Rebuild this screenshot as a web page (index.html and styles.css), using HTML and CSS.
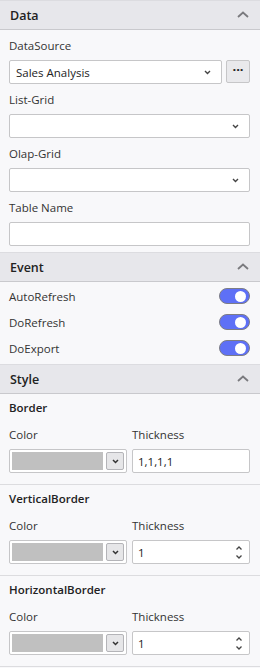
FILE: index.html
```html
<!DOCTYPE html>
<html lang="en">
<head>
  <meta charset="UTF-8" />
  <meta name="viewport" content="width=device-width, initial-scale=1.0"/>
  <title>Properties</title>
  <link rel="stylesheet" href="styles.css">
</head>
<body>
  <div class="panel">

    <!-- Data -->
    <div class="group">
      <div class="group-head">
        <span>Data</span>
        <svg class="caret" width="12" height="7" viewBox="0 0 12 7"><path d="M1 6 L6 1.5 L11 6" fill="none" stroke="#7a7a7e" stroke-width="1.8"/></svg>
      </div>
      <div class="group-body data-body">
        <div class="field">
          <label>DataSource</label>
          <div class="row">
            <div class="select">
              <span>Sales Analysis</span>
              <svg class="chev" width="7" height="5" viewBox="0 0 7 5"><path d="M1 1 L3.5 3.5 L6 1" fill="none" stroke="#444" stroke-width="1.4"/></svg>
            </div>
            <button class="more">&middot;&middot;&middot;</button>
          </div>
        </div>
        <div class="field">
          <label>List-Grid</label>
          <div class="select">
            <span></span>
            <svg class="chev" width="7" height="5" viewBox="0 0 7 5"><path d="M1 1 L3.5 3.5 L6 1" fill="none" stroke="#444" stroke-width="1.4"/></svg>
          </div>
        </div>
        <div class="field">
          <label>Olap-Grid</label>
          <div class="select">
            <span></span>
            <svg class="chev" width="7" height="5" viewBox="0 0 7 5"><path d="M1 1 L3.5 3.5 L6 1" fill="none" stroke="#444" stroke-width="1.4"/></svg>
          </div>
        </div>
        <div class="field">
          <label>Table Name</label>
          <div class="input"></div>
        </div>
      </div>
    </div>

    <!-- Event -->
    <div class="group">
      <div class="group-head">
        <span>Event</span>
        <svg class="caret" width="12" height="7" viewBox="0 0 12 7"><path d="M1 6 L6 1.5 L11 6" fill="none" stroke="#7a7a7e" stroke-width="1.8"/></svg>
      </div>
      <div class="group-body event-body">
        <div class="switch-row"><span>AutoRefresh</span><div class="switch on"></div></div>
        <div class="switch-row"><span>DoRefresh</span><div class="switch on"></div></div>
        <div class="switch-row"><span>DoExport</span><div class="switch on"></div></div>
      </div>
    </div>

    <!-- Style -->
    <div class="group">
      <div class="group-head">
        <span>Style</span>
        <svg class="caret" width="12" height="7" viewBox="0 0 12 7"><path d="M1 6 L6 1.5 L11 6" fill="none" stroke="#7a7a7e" stroke-width="1.8"/></svg>
      </div>
      <div class="group-body style-body">
        <div class="sub">
          <div class="sub-title">Border</div>
          <div class="cols">
            <div class="field">
              <label>Color</label>
              <div class="picker"><div class="swatch"></div><div class="pick-btn"><svg width="7" height="5" viewBox="0 0 7 5"><path d="M1 1 L3.5 3.5 L6 1" fill="none" stroke="#333" stroke-width="1.5"/></svg></div></div>
            </div>
            <div class="field">
              <label>Thickness</label>
              <div class="input"><span>1,1,1,1</span></div>
            </div>
          </div>
        </div>
        <div class="sub">
          <div class="sub-title">VerticalBorder</div>
          <div class="cols">
            <div class="field">
              <label>Color</label>
              <div class="picker"><div class="swatch"></div><div class="pick-btn"><svg width="7" height="5" viewBox="0 0 7 5"><path d="M1 1 L3.5 3.5 L6 1" fill="none" stroke="#333" stroke-width="1.5"/></svg></div></div>
            </div>
            <div class="field">
              <label>Thickness</label>
              <div class="input number">
                <span>1</span>
                <svg class="spin" width="8" height="15" viewBox="0 0 8 15"><path d="M1.5 4.5 L4 2 L6.5 4.5 M1.5 10.5 L4 13 L6.5 10.5" fill="none" stroke="#444" stroke-width="1.3"/></svg>
              </div>
            </div>
          </div>
        </div>
        <div class="sub">
          <div class="sub-title">HorizontalBorder</div>
          <div class="cols">
            <div class="field">
              <label>Color</label>
              <div class="picker"><div class="swatch"></div><div class="pick-btn"><svg width="7" height="5" viewBox="0 0 7 5"><path d="M1 1 L3.5 3.5 L6 1" fill="none" stroke="#333" stroke-width="1.5"/></svg></div></div>
            </div>
            <div class="field">
              <label>Thickness</label>
              <div class="input number">
                <span>1</span>
                <svg class="spin" width="8" height="15" viewBox="0 0 8 15"><path d="M1.5 4.5 L4 2 L6.5 4.5 M1.5 10.5 L4 13 L6.5 10.5" fill="none" stroke="#444" stroke-width="1.3"/></svg>
              </div>
            </div>
          </div>
        </div>
      </div>
    </div>

  </div>
</body>
</html>
```

FILE: styles.css
```css
:root {
  --head-bg: #e7e7eb;
  --body-bg: #f8f8fa;
  --line: #c9c9cd;
  --input-border: #c6c6c8;
  --text: #333;
  --accent: #5e70f6;
}
body {
  margin: 0;
  font-family: 'Open Sans', 'Noto Sans', sans-serif;
  font-size: 11.5px;
  color: var(--text);
  background: var(--body-bg);
}
.panel {
  width: 260px;
}
.group-head {
  height: 28px;
  display: flex;
  align-items: center;
  justify-content: space-between;
  padding: 0 11px 0 10px;
  background: var(--head-bg);
  border-top: 1px solid #dcdce0;
  border-bottom: 1px solid var(--line);
  font-size: 12.5px;
  font-weight: 600;
  color: #222;
}
.caret {
  margin-top: -2px;
}
.group-body {
  background: var(--body-bg);
}
.data-body {
  display: flex;
  flex-direction: column;
  gap: 8px;
  padding: 8px 10px 6px 9px;
}
.field {
  display: flex;
  flex-direction: column;
  gap: 6px;
}
.field label {
  line-height: 16px;
}
.row {
  display: flex;
  gap: 4px;
}
.row .select {
  flex: 1;
}
.select, .input {
  height: 22px;
  display: flex;
  align-items: center;
  justify-content: space-between;
  padding: 0 10px 0 6px;
  background: #fff;
  border: 1px solid var(--input-border);
  border-radius: 2px;
  color: #222;
}
.input {
  padding-left: 5px;
}
.more {
  width: 24px;
  height: 23px;
  padding: 0 0 4px;
  background: #e9e9ec;
  border: 1px solid var(--input-border);
  border-radius: 2px;
  font-family: inherit;
  font-size: 13px;
  font-weight: 700;
  line-height: 1;
  color: #222;
}
.event-body {
  padding: 1px 10px 3px 9px;
}
.switch-row {
  height: 26px;
  display: flex;
  align-items: center;
  justify-content: space-between;
}
.switch {
  position: relative;
  width: 29px;
  height: 14px;
  border: 1px solid #7d7d85;
  border-radius: 8px;
  background: var(--accent);
}
.switch.on::after {
  content: "";
  position: absolute;
  top: 1.5px;
  right: 3px;
  width: 11px;
  height: 11px;
  border-radius: 50%;
  background: #fff;
}
.sub {
  padding: 6px 10px 11px 9px;
  border-bottom: 1px solid #dcdcdf;
}
.sub-title {
  line-height: 16px;
  font-weight: 600;
  color: #222;
  margin-bottom: 11px;
}
.cols {
  display: grid;
  grid-template-columns: 1fr 1fr;
  gap: 5px;
}
.picker {
  height: 18px;
  display: flex;
  gap: 3px;
  padding: 2px;
  background: #fff;
  border: 1px solid var(--input-border);
  border-radius: 2px;
}
.swatch {
  flex: 1;
  background: #c0c0c0;
}
.pick-btn {
  width: 16px;
  display: flex;
  align-items: center;
  justify-content: center;
  background: #e6e6e8;
  border: 1px solid #b4b4b8;
  border-radius: 2px;
}
.number {
  padding-right: 6px;
}
```
